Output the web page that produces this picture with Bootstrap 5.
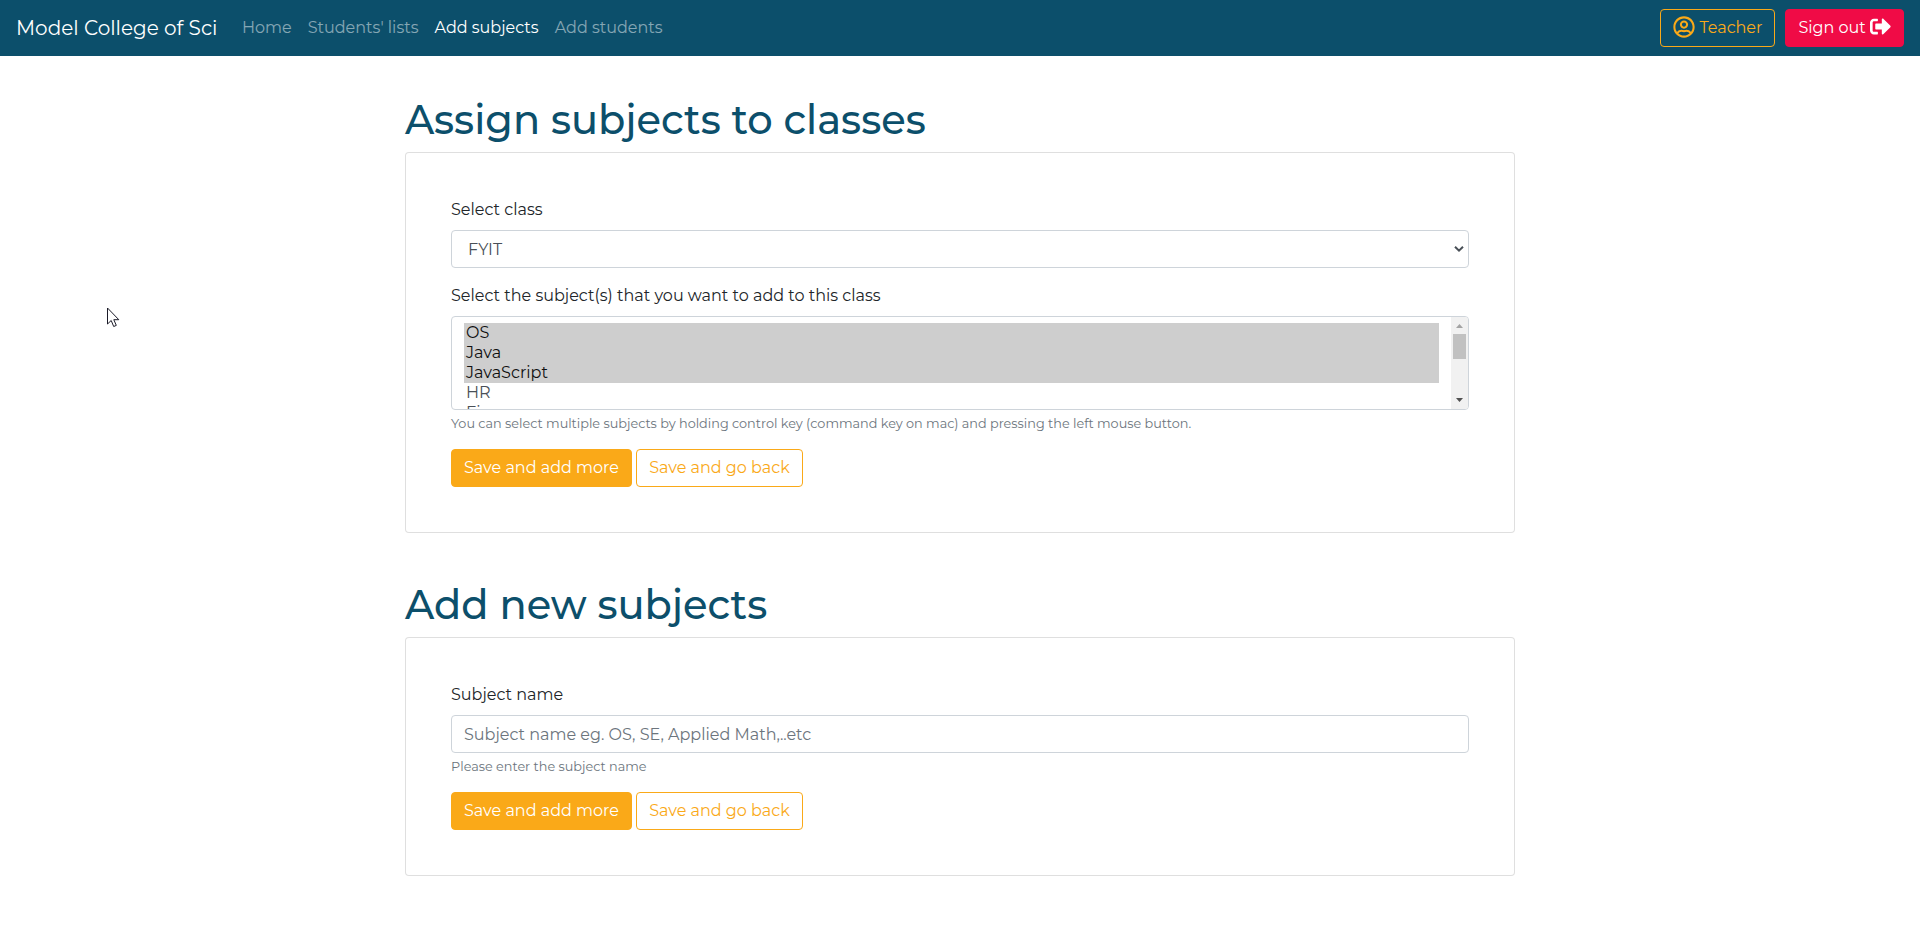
<!DOCTYPE html>
<html lang="en">
<head>
<meta charset="utf-8">
<meta name="viewport" content="width=device-width, initial-scale=1">
<title>Add subjects</title>
<link href="https://cdn.jsdelivr.net/npm/bootstrap@5.3.0/dist/css/bootstrap.min.css" rel="stylesheet">
<style>
body{font-family:Montserrat,Inter,"Open Sans",sans-serif;color:#212529;background:#fff}
.topbar{background:#0c4f6b;height:56px;padding:0 16px}
.topbar .navbar-brand{font-size:20px;color:#fff;margin-right:16.6px;padding:0;line-height:30px}
.topbar .nav-link{color:rgba(255,255,255,.5);padding:8px}
.topbar .nav-link.active{color:#fff}
.btn{border-radius:4px;padding:6px 12px;white-space:nowrap}
.btn svg{display:inline-block;vertical-align:-5px}
.btn-amber{background:#faa918;border-color:#faa918;color:#fff}
.btn-outline-amber{border-color:#faa918;color:#faa918}
.btn-crimson{background:#f00b46;border-color:#f00b46;color:#fff}
.btn-crimson svg{vertical-align:-4px}
.topbar .btn{height:38px}
.page{width:1140px;max-width:1140px;padding:40px 15px 0}
h1{font-size:40px;font-weight:500;line-height:1.2;color:#0c4f6b;margin-bottom:8px}
.panel{border:1px solid rgba(0,0,0,.125);border-radius:4px}
.panel .card-body{padding:45px}
.form-label{display:block;margin-bottom:8px;line-height:24px}
.form-control,.form-select{border-color:#ced4da;border-radius:4px;color:#495057;height:38px}
.form-control::placeholder{color:#6c757d}
.form-select{padding:7px 36px 5px 16px;background-position:right 4px center;background-size:10px 8px;background-image:url("data:image/svg+xml,%3Csvg xmlns='http://www.w3.org/2000/svg' viewBox='0 0 10 8'%3E%3Cpath d='M1 1.7 5 5.7 9 1.7' fill='none' stroke='%23495057' stroke-width='2'/%3E%3C/svg%3E")}
.form-text{font-size:12.8px;line-height:19.2px;margin-top:4px;color:#6c757d}
.subject-list{height:94px;border:1px solid #ced4da;border-radius:4px;overflow:hidden}
.options{padding:6px 12px;color:#495057;overflow:hidden}
.options div{height:20px;line-height:19px;padding-left:2px}
.options .picked{background:#cecece;color:#101010}
.scroller{width:17px;background:#f1f1f1;padding:7px 0}
.thumb{width:13px;height:25px;background:#c1c1c1;margin-top:6px}
.pointer{position:absolute;left:107px;top:307px}
</style>
</head>
<body>
<nav class="navbar topbar navbar-expand flex-nowrap">
  <a class="navbar-brand" href="#">Model College of Sci</a>
  <div class="navbar-nav me-auto">
    <a class="nav-link" href="#">Home</a>
    <a class="nav-link" href="#">Students' lists</a>
    <a class="nav-link active" href="#">Add subjects</a>
    <a class="nav-link" href="#">Add students</a>
  </div>
  <div class="d-flex" style="gap:10px">
    <button class="btn btn-outline-amber" type="button"><svg width="22" height="22" viewBox="0 0 496 512" fill="currentColor"><path d="M248 104c-53 0-96 43-96 96s43 96 96 96 96-43 96-96-43-96-96-96zm0 144c-26.500 0-48-21.500-48-48s21.500-48 48-48 48 21.500 48 48-21.500 48-48 48zm0-240C111 8 0 119 0 256s111 248 248 248 248-111 248-248S385 8 248 8zm0 448c-49.700 0-95.100-18.300-130.100-48.400 14.900-23 40.400-38.600 69.600-39.500 20.800 6.400 40.600 9.600 60.500 9.600s39.700-3.100 60.500-9.600c29.200 1 54.700 16.500 69.600 39.500-35 30.100-80.400 48.400-130.100 48.400zm162.700-84.100c-24.400-31.400-62.100-51.900-105.100-51.900-10.200 0-26 9.600-57.600 9.600-31.500 0-47.400-9.600-57.600-9.600-42.900 0-80.600 20.500-105.100 51.900C61.900 339.200 48 299.200 48 256c0-110.300 89.700-200 200-200s200 89.700 200 200c0 43.200-13.900 83.200-37.300 115.900z"/></svg> Teacher</button>
    <button class="btn btn-crimson" type="button">Sign out <svg width="21" height="21" viewBox="0 0 512 512" fill="currentColor"><path d="M497 273L329 441c-15 15-41 4.500-41-17v-96H152c-13.300 0-24-10.700-24-24v-96c0-13.300 10.700-24 24-24h136V88c0-21.400 25.900-32 41-17l168 168c9.300 9.400 9.300 24.600 0 34zM192 436v-40c0-6.600-5.400-12-12-12H96c-17.700 0-32-14.300-32-32V160c0-17.700 14.300-32 32-32h84c6.600 0 12-5.400 12-12V76c0-6.600-5.400-12-12-12H96c-53 0-96 43-96 96v192c0 53 43 96 96 96h84c6.600 0 12-5.400 12-12z"/></svg></button>
  </div>
</nav>
<main class="container page">
  <h1>Assign subjects to classes</h1>
  <div class="card panel mb-5"><div class="card-body">
    <label class="form-label" for="class">Select class</label>
    <select class="form-select mb-3" id="class"><option>FYIT</option></select>
    <label class="form-label">Select the subject(s) that you want to add to this class</label>
    <div class="subject-list d-flex">
      <div class="options flex-grow-1">
        <div class="picked">OS</div>
        <div class="picked">Java</div>
        <div class="picked">JavaScript</div>
        <div>HR</div>
        <div>Finance</div>
      </div>
      <div class="scroller d-flex flex-column align-items-center">
        <svg width="7" height="4" viewBox="0 0 7 4"><path d="M0 4 3.500 0 7 4z" fill="#a3a3a3"/></svg>
        <div class="thumb"></div>
        <svg class="mt-auto" width="7" height="4" viewBox="0 0 7 4"><path d="M0 0h7L3.500 4z" fill="#505050"/></svg>
      </div>
    </div>
    <div class="form-text mb-3">You can select multiple subjects by holding control key (command key on mac) and pressing the left mouse button.</div>
    <button class="btn btn-amber" type="button">Save and add more</button>
    <button class="btn btn-outline-amber" type="button">Save and go back</button>
  </div></div>
  <h1>Add new subjects</h1>
  <div class="card panel"><div class="card-body">
    <label class="form-label" for="subject">Subject name</label>
    <input class="form-control" id="subject" placeholder="Subject name eg. OS, SE, Applied Math,..etc">
    <div class="form-text mb-3">Please enter the subject name</div>
    <button class="btn btn-amber" type="button">Save and add more</button>
    <button class="btn btn-outline-amber" type="button">Save and go back</button>
  </div></div>
</main>
<svg class="pointer" width="13" height="21" viewBox="0 0 13 21"><path d="M.5 1v16l3.700-3.500 2.500 6 2.600-1.100-2.500-5.700h5z" fill="#fff" stroke="#1b1b28"/></svg>
<script src="https://cdn.jsdelivr.net/npm/bootstrap@5.3.0/dist/js/bootstrap.bundle.min.js"></script>
</body>
</html>
